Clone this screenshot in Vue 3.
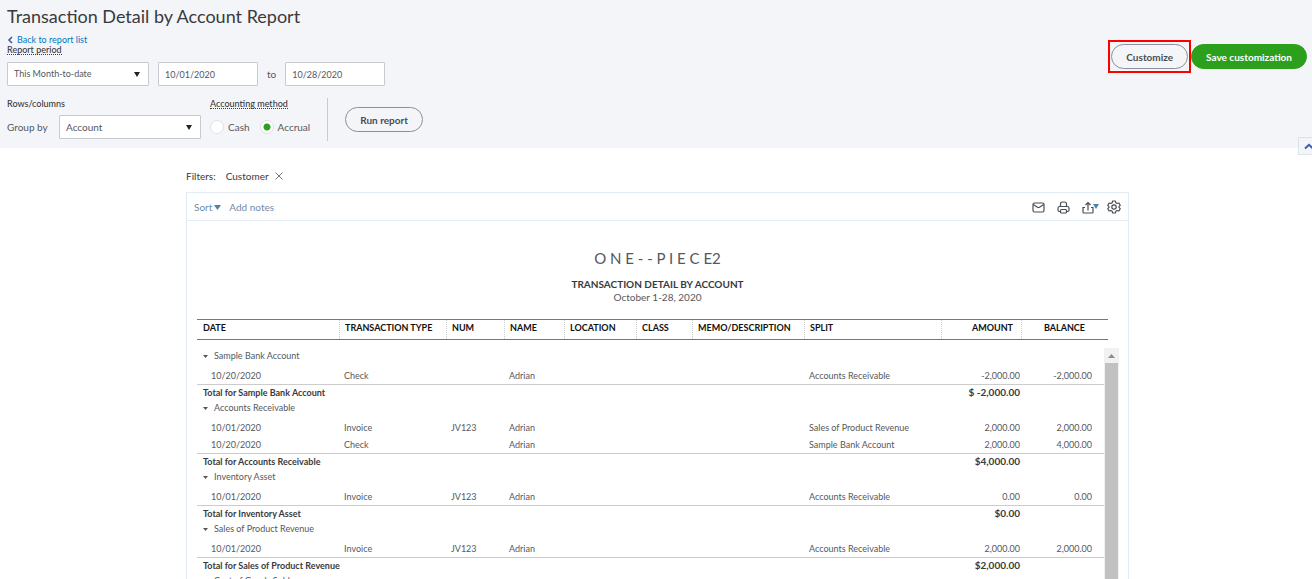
<script setup>
import { ref } from 'vue'

const period = ref('This Month-to-date')
const groupBy = ref('Account')
const from = ref('10/01/2020')
const to = ref('10/28/2020')
const method = ref('accrual')

const columns = [
  { key: 'date', label: 'DATE' },
  { key: 'type', label: 'TRANSACTION TYPE' },
  { key: 'num', label: 'NUM' },
  { key: 'name', label: 'NAME' },
  { key: 'location', label: 'LOCATION' },
  { key: 'class', label: 'CLASS' },
  { key: 'memo', label: 'MEMO/DESCRIPTION' },
  { key: 'split', label: 'SPLIT' },
  { key: 'amount', label: 'AMOUNT' },
  { key: 'balance', label: 'BALANCE' },
]

const groups = [
  {
    name: 'Sample Bank Account',
    total: '$ -2,000.00',
    rows: [
      { date: '10/20/2020', type: 'Check', name: 'Adrian', split: 'Accounts Receivable', amount: '-2,000.00', balance: '-2,000.00' },
    ],
  },
  {
    name: 'Accounts Receivable',
    total: '$4,000.00',
    rows: [
      { date: '10/01/2020', type: 'Invoice', num: 'JV123', name: 'Adrian', split: 'Sales of Product Revenue', amount: '2,000.00', balance: '2,000.00' },
      { date: '10/20/2020', type: 'Check', name: 'Adrian', split: 'Sample Bank Account', amount: '2,000.00', balance: '4,000.00' },
    ],
  },
  {
    name: 'Inventory Asset',
    total: '$0.00',
    rows: [
      { date: '10/01/2020', type: 'Invoice', num: 'JV123', name: 'Adrian', split: 'Accounts Receivable', amount: '0.00', balance: '0.00' },
    ],
  },
  {
    name: 'Sales of Product Revenue',
    total: '$2,000.00',
    rows: [
      { date: '10/01/2020', type: 'Invoice', num: 'JV123', name: 'Adrian', split: 'Accounts Receivable', amount: '2,000.00', balance: '2,000.00' },
    ],
  },
  { name: 'Cost of Goods Sold', rows: [] },
]
</script>

<template>
  <div class="page">
    <header class="top">
      <h1>Transaction Detail by Account Report</h1>
      <a class="back" href="#">
        <svg width="6" height="8" viewBox="0 0 6 8"><path d="M5 1 2 4l3 3" fill="none" stroke="#3a5dae" stroke-width="1.6" /></svg>
        Back to report list
      </a>
      <div class="label-row"><label class="hint" for="period">Report period</label></div>
      <div class="period-row">
        <span class="select">
          <select id="period" v-model="period"><option>This Month-to-date</option></select>
          <svg width="6" height="5" viewBox="0 0 6 5"><path d="M0 0h6L3 5z" fill="#222" /></svg>
        </span>
        <input class="date-input" type="text" v-model="from" aria-label="From date" />
        <label class="to" for="to-date">to</label>
        <input id="to-date" class="date-input" type="text" v-model="to" />
      </div>
      <div class="options">
        <div class="group">
          <div class="caption">Rows/columns</div>
          <div class="controls">
            <label class="group-label" for="group-by">Group by</label>
            <span class="select">
              <select id="group-by" v-model="groupBy"><option>Account</option></select>
              <svg width="6" height="5" viewBox="0 0 6 5"><path d="M0 0h6L3 5z" fill="#222" /></svg>
            </span>
          </div>
        </div>
        <div class="group method">
          <div class="caption"><span class="hint">Accounting method</span></div>
          <div class="controls">
            <label class="radio"><input type="radio" name="method" value="cash" v-model="method" />Cash</label>
            <label class="radio"><input type="radio" name="method" value="accrual" v-model="method" />Accrual</label>
          </div>
        </div>
        <div class="run"><button class="pill" type="button">Run report</button></div>
      </div>
      <div class="actions">
        <div class="highlight"><button class="pill" type="button">Customize</button></div>
        <button class="pill primary" type="button">Save customization</button>
      </div>
      <button class="collapse" type="button" aria-label="Collapse">
        <svg width="10" height="7" viewBox="0 0 10 7"><path d="M1 5.5 5 1.8l4 3.7" fill="none" stroke="#3a5dae" stroke-width="2" /></svg>
      </button>
    </header>

    <div class="filters">
      <span>Filters:</span>
      <span class="filter">Customer
        <button type="button" aria-label="Remove filter">
          <svg width="8" height="8" viewBox="0 0 8 8"><path d="m.5.5 7 7m0-7-7 7" fill="none" stroke="#777" /></svg>
        </button>
      </span>
    </div>

    <main class="report">
      <div class="toolbar">
        <button class="link" type="button">Sort<svg width="7" height="5" viewBox="0 0 7 5"><path d="M0 0h7L3.500 5z" fill="#4d82ab" /></svg></button>
        <button class="link" type="button">Add notes</button>
        <span class="spacer"></span>
        <button class="icon" type="button" aria-label="Email">
          <svg width="13" height="11" viewBox="0 0 13 11" fill="none" stroke="#4a4d52" stroke-width="1.200"><rect x="1" y="1" width="11" height="9" rx="1.500" /><path d="m1.300 2.500 4.200 2.700q1 .6 2 0l4.200-2.700" /></svg>
        </button>
        <button class="icon" type="button" aria-label="Print">
          <svg width="13" height="13" viewBox="0 0 13 13" fill="none" stroke="#4a4d52" stroke-width="1.200"><path d="M3.500 5.500V3q0-2 2-2h2q2 0 2 2v2.500M3.500 10.500H2.400Q1 10.500 1 9V7.200q0-1.700 1.600-1.700h7.800Q12 5.500 12 7.200V9q0 1.500-1.400 1.500H9.500" /><rect x="3.500" y="8.500" width="6" height="3.500" rx="1" /></svg>
        </button>
        <button class="icon export" type="button" aria-label="Export">
          <svg width="17" height="13" viewBox="0 0 17 13"><g fill="none" stroke="#4a4d52" stroke-width="1.200"><path d="M3 6.500H1V11q0 1 1 1h8q1 0 1-1V6.500H9" /><path d="M6 9.500V1.500M3.500 4 6 1.500 8.500 4" /></g><path d="M11 3h6l-3 5z" fill="#4d82ab" /></svg>
        </button>
        <button class="icon settings" type="button" aria-label="Settings">
          <svg width="14" height="14" viewBox="0 0 14 14" fill="none" stroke="#4a4d52" stroke-width="1.200" stroke-linejoin="round"><path d="M5.700 1h2.600l.5 1.700 1.300.8 1.800-.5 1.300 2.300L12 6.600v.8l1.200 1.300-1.300 2.300-1.800-.5-1.300.8L8.300 13H5.700l-.5-1.700-1.300-.8-1.800.5L.8 8.700 2 7.400v-.8L.8 5.300 2.100 3l1.800.5 1.300-.8z" /><circle cx="7" cy="7" r="2.200" /></svg>
        </button>
      </div>

      <div class="heading">
        <h2>O N E - - P I E C E2</h2>
        <h3>TRANSACTION DETAIL BY ACCOUNT</h3>
        <p>October 1-28, 2020</p>
      </div>

      <table class="head">
        <colgroup><col v-for="c in columns" :key="c.key" :class="c.key" /></colgroup>
        <thead>
          <tr><th v-for="c in columns" :key="c.key" scope="col" :class="c.key">{{ c.label }}</th></tr>
        </thead>
      </table>

      <div class="scroller">
        <table class="body">
          <colgroup><col v-for="c in columns" :key="c.key" :class="c.key" /></colgroup>
          <tbody v-for="g in groups" :key="g.name">
            <tr class="title">
              <td colspan="10">
                <svg width="5" height="3" viewBox="0 0 5 3"><path d="M0 0h5L2.500 3z" fill="#555" /></svg>{{ g.name }}
              </td>
            </tr>
            <tr v-for="(r, i) in g.rows" :key="i" class="entry">
              <td v-for="c in columns" :key="c.key" :class="c.key">{{ r[c.key] }}</td>
            </tr>
            <tr v-if="g.total" class="total">
              <td colspan="8">Total for {{ g.name }}</td>
              <td class="amount">{{ g.total }}</td>
              <td></td>
            </tr>
          </tbody>
        </table>
        <div class="bar">
          <div class="up"><svg width="7" height="4" viewBox="0 0 7 4"><path d="M0 4h7L3.500 0z" fill="#8c8c8c" /></svg></div>
          <div class="thumb"></div>
        </div>
      </div>
    </main>
  </div>
</template>

<style>
body {
  margin: 0;
  overflow: hidden;
}
</style>

<style scoped>
.page {
  display: flex;
  flex-direction: column;
  height: 100vh;
  background: #fff;
  color: #55585d;
  font-family: Lato, "Liberation Sans", sans-serif;
  font-size: 10px;
  line-height: 16px;
}

button,
input,
select {
  box-sizing: border-box;
  margin: 0;
  color: inherit;
  font: inherit;
}

button {
  padding: 0;
  border: 0;
  background: none;
}

svg {
  display: block;
  flex: none;
}

.top {
  position: relative;
  box-sizing: border-box;
  padding: 4px 5px 7px 7px;
  background: #f4f5f8;
}

h1 {
  margin: 0 0 8px;
  color: #393a3d;
  font-size: 18px;
  font-weight: 400;
  line-height: 24px;
}

.back {
  display: flex;
  align-items: center;
  gap: 4px;
  width: max-content;
  height: 8px;
  color: #0077c5;
  font-size: 9px;
  text-decoration: none;
}

.label-row {
  display: flex;
  margin-top: 1px;
}

.hint {
  border-bottom: 1px dotted #393a3d;
  color: #393a3d;
  font-size: 9px;
  font-weight: 500;
  line-height: 9px;
}

.period-row {
  display: flex;
  align-items: center;
  gap: 9px;
  margin-top: 7px;
  font-size: 9px;
}

.to {
  font-size: 10px;
}

.select {
  display: grid;
  align-items: center;
  width: 142px;
}

.select > * {
  grid-area: 1 / 1;
}

.select svg {
  margin-right: 9px;
  justify-self: end;
  pointer-events: none;
}

select,
.date-input {
  width: 100%;
  height: 24px;
  padding: 0 6px;
  border: 1px solid #c7cad1;
  border-radius: 1px;
  outline: 0;
  background: #fff;
  appearance: none;
}

.date-input {
  width: 100px;
}

.options {
  display: flex;
  align-items: flex-start;
  margin-top: 12px;
}

.caption {
  display: flex;
  align-items: center;
  height: 12px;
  color: #393a3d;
  font-size: 9px;
  font-weight: 500;
}

.controls {
  display: flex;
  align-items: center;
  height: 24px;
  margin-top: 5px;
}

.group-label {
  width: 52px;
}

.method {
  margin-left: 9px;
}

.method .controls {
  gap: 10px;
}

.radio {
  display: flex;
  align-items: center;
  gap: 4px;
}

.radio input {
  width: 14px;
  height: 14px;
  border: 1px solid #dfe1e5;
  border-radius: 50%;
  background: #fff;
  appearance: none;
}

.radio input:checked {
  background: radial-gradient(circle, #2ca01c 3px, #fff 4px);
}

.run {
  display: flex;
  align-items: center;
  height: 43px;
  margin-left: 17px;
  padding-left: 17px;
  border-left: 1px solid #c7cad1;
}

.pill {
  height: 25px;
  padding: 0 14px;
  border: 1px solid #8d9096;
  border-radius: 13px;
  color: #4a4d52;
  font-weight: 700;
}

.primary {
  border-color: #2ca01c;
  background: #2ca01c;
  color: #fff;
}

.actions {
  position: absolute;
  top: 40px;
  right: 5px;
  display: flex;
  align-items: center;
}

.highlight {
  padding: 2px 1px;
  border: 2px solid #f00;
}

.collapse {
  position: absolute;
  right: 0;
  bottom: -7px;
  display: flex;
  align-items: center;
  width: 14px;
  height: 18px;
  padding-left: 5px;
  border: 1px solid #dde3ee;
  border-right: 0;
  background: #f4f5f8;
  overflow: hidden;
}

.filters {
  display: flex;
  gap: 10px;
  margin: 20px 183px 8px 186px;
  color: #393a3d;
}

.filter,
.filter button {
  display: flex;
  align-items: center;
}

.filter {
  gap: 6px;
}

.report {
  display: flex;
  flex: 1;
  flex-direction: column;
  min-height: 0;
  margin: 0 183px 0 186px;
  border: 1px solid #e3ebf4;
  border-bottom: 0;
}

.toolbar {
  display: flex;
  align-items: center;
  gap: 8px;
  height: 27px;
  padding: 0 7px;
  border-bottom: 1px solid #e3ebf4;
}

.link {
  display: flex;
  align-items: center;
  gap: 2px;
  color: #6f8ba8;
}

.link svg {
  margin-top: 2px;
}

.spacer {
  flex: 1;
}

.icon {
  display: flex;
  align-items: center;
  height: 18px;
  padding-top: 2px;
}

.icon + .icon {
  margin-left: 4px;
}

.export + .settings {
  margin-left: 0;
  padding-top: 0;
}

.heading {
  padding: 27px 0 15px;
  text-align: center;
}

h2 {
  margin: 0 0 9px;
  font-size: 15px;
  font-weight: 400;
  line-height: 20px;
}

h3 {
  margin: 0;
  color: #393a3d;
  font-size: 10px;
  font-weight: 700;
  line-height: 14px;
}

p {
  margin: 0;
  line-height: 13px;
}

table {
  border-spacing: 0;
  table-layout: fixed;
}

.head {
  margin: 0 20px 0 10px;
  border-top: 1px solid #777;
  border-bottom: 1px solid #777;
}

col.date { width: 142px; }
col.type { width: 107px; }
col.num { width: 58px; }
col.name { width: 60px; }
col.location { width: 72px; }
col.class { width: 56px; }
col.memo { width: 112px; }
col.split { width: 137px; }
col.amount { width: 80px; }

th {
  padding: 0 0 3px 5px;
  border-left: 1px dotted #ccc;
  color: #111;
  font-size: 9px;
  font-weight: 700;
  line-height: 16px;
  text-align: left;
  white-space: nowrap;
}

th.date {
  padding-left: 6px;
  border-left: 0;
}

th.amount {
  padding-right: 8px;
  text-align: right;
}

th.balance {
  padding-right: 23px;
  text-align: right;
}

.scroller {
  display: flex;
  flex: 1;
  min-height: 0;
  margin: 8px 9px 0 10px;
  overflow: hidden;
}

.body {
  flex: 1;
  align-self: flex-start;
  min-width: 0;
}

td {
  padding: 0 0 0 5px;
  font-size: 9px;
  line-height: 16px;
  white-space: nowrap;
}

.title td {
  padding-bottom: 3px;
}

.title svg {
  display: inline-block;
  margin: 0 6px 1px 1px;
}

.entry td {
  line-height: 17px;
}

td.date {
  padding-left: 14px;
}

td.amount {
  padding-right: 1px;
  text-align: right;
}

td.balance {
  padding-right: 12px;
  text-align: right;
}

.total td {
  padding-left: 6px;
  border-top: 1px solid #ccc;
  color: #393a3d;
  font-weight: 700;
  line-height: 15px;
}

.total td.amount {
  font-size: 10px;
}

.bar {
  display: flex;
  flex: none;
  flex-direction: column;
  width: 15px;
  background: #f1f1f1;
}

.up {
  display: grid;
  place-items: center;
  height: 15px;
}

.thumb {
  flex: 1;
  margin: 0 1px;
  background: #c1c1c1;
}
</style>
